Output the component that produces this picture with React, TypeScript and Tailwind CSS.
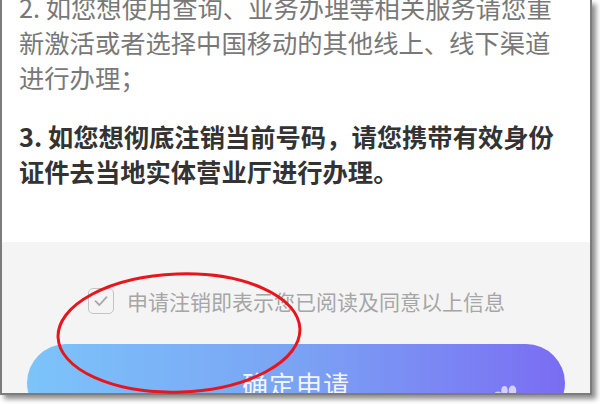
import React from "react";

const FONT = { fontFamily: '"Noto Sans CJK SC", "Noto Sans", sans-serif' };

function CheckBox() {
  return (
    <span className="flex h-[26px] w-[26px] shrink-0 items-center justify-center rounded-[5px] border-[1.5px] border-[#c4c4c4]">
      <svg width="16" height="16" viewBox="0 0 16 16" fill="none">
        <path
          d="M2.5 8.2 6.4 12 13.5 4.2"
          stroke="#a8a8a8"
          strokeWidth="1.8"
          strokeLinecap="round"
          strokeLinejoin="round"
        />
      </svg>
    </span>
  );
}

export default function App() {
  return (
    <div className="relative h-[404px] w-[600px] overflow-hidden bg-white" style={FONT}>
      {/* screenshot frame with drop shadow */}
      <div className="flex h-[395px] w-[592px] flex-col overflow-hidden border-x-2 border-b-2 border-[#7c7c7c] shadow-[4px_4px_5px_rgba(0,0,0,0.45)]">
        {/* notice text */}
        <div className="bg-white pb-[53px] pl-[17px] text-[25.3px] leading-[35px]">
          <p className="mt-[-10px] whitespace-nowrap text-[#787878]">
            2. 如您想使用查询、业务办理等相关服务请您重
            <br />
            新激活或者选择中国移动的其他线上、线下渠道
            <br />
            进行办理；
          </p>
          <p className="mt-[24px] whitespace-nowrap font-bold text-[#333333]">
            3. 如您想彻底注销当前号码，请您携带有效身份
            <br />
            证件去当地实体营业厅进行办理。
          </p>
        </div>

        {/* agreement + submit */}
        <div className="flex-1 bg-[#f4f4f4]">
          <div className="ml-[86px] mt-[46px] flex items-center gap-[13px]">
            <CheckBox />
            <span className="text-[21px] leading-[26px] text-[#a6a6a6]">
              申请注销即表示您已阅读及同意以上信息
            </span>
          </div>
          <div className="relative mx-[25px] mt-[30px] flex h-[78px] items-center justify-center rounded-full bg-gradient-to-r from-[#7cc4fa] via-[#7aa3f4] to-[#7a6cf2]">
            <span className="text-[26px] tracking-[1px] text-[#f4f4ff]">确定申请</span>
            <svg className="absolute left-[468px] top-[40px]" width="24" height="14" viewBox="0 0 24 14">
              <ellipse cx="3" cy="9" rx="3" ry="1.5" fill="#cfcaf9" />
              <ellipse cx="9.5" cy="6.5" rx="3.2" ry="4.5" fill="#d4d0fa" />
              <ellipse cx="17.5" cy="6.5" rx="3.8" ry="5" fill="#d4d0fa" />
            </svg>
          </div>
        </div>
      </div>

      {/* red hand-drawn ellipse annotation */}
      <svg className="pointer-events-none absolute left-0 top-0" width="600" height="404">
        <ellipse
          cx="179"
          cy="333"
          rx="121"
          ry="59"
          transform="rotate(-2 179 333)"
          fill="none"
          stroke="#e8161c"
          strokeWidth="3"
        />
      </svg>
    </div>
  );
}
